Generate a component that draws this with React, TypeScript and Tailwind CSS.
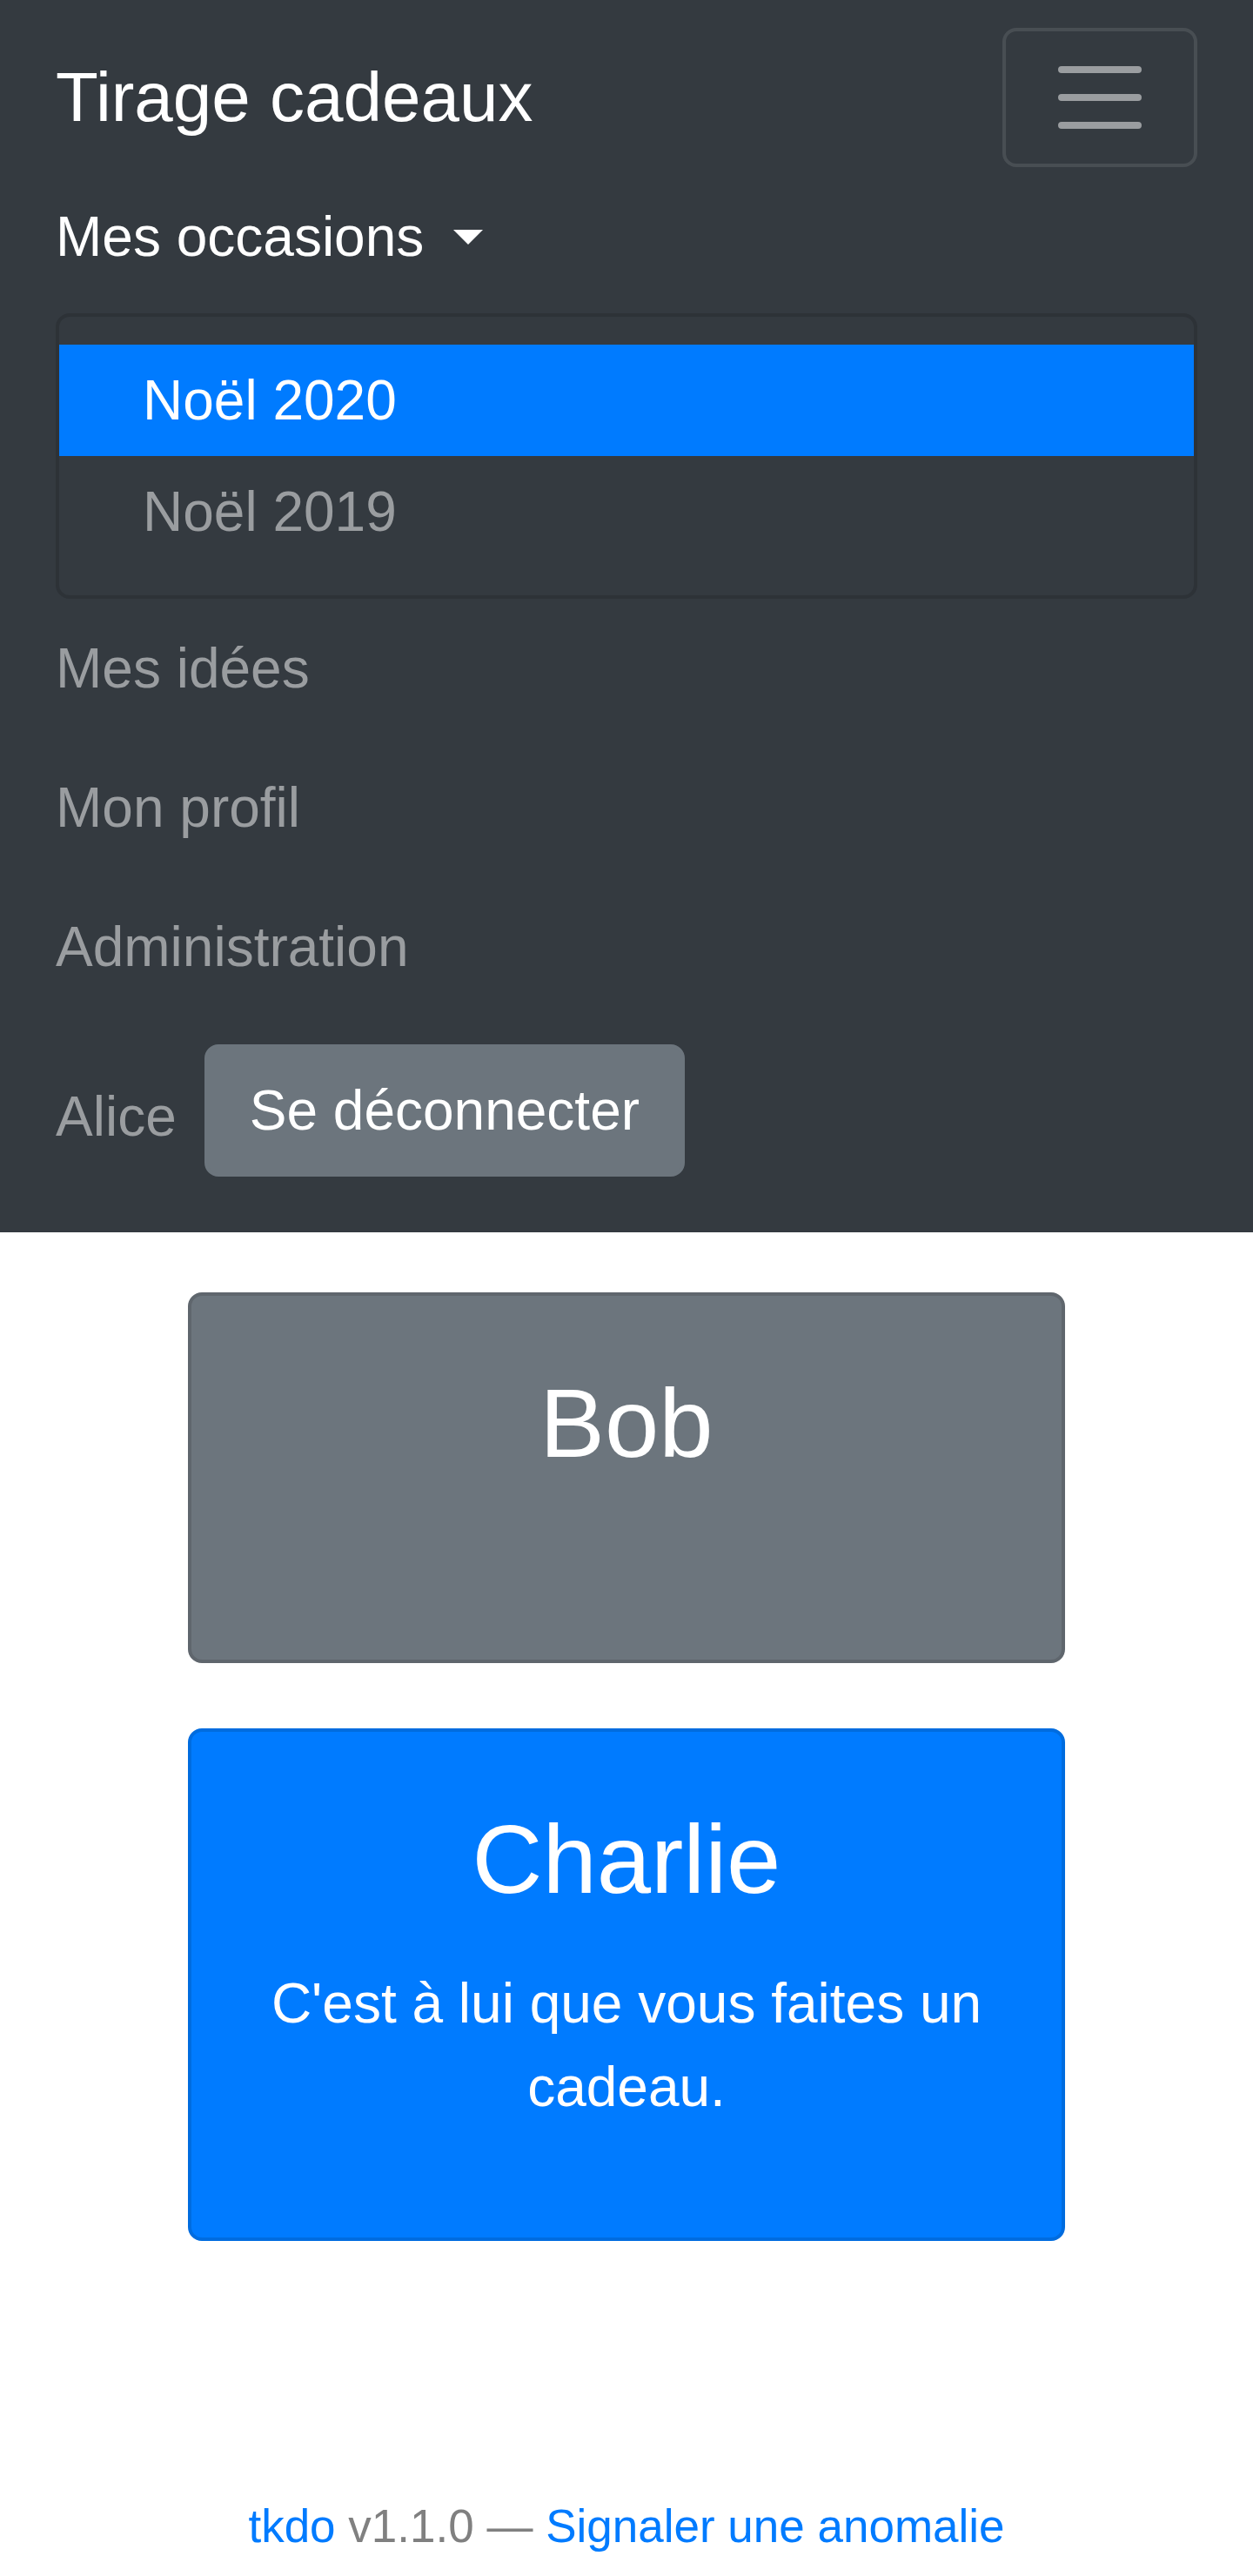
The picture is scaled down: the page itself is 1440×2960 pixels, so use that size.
import { useState } from 'react';

const occasions = [
    { id: 2, titre: 'Noël 2020' },
    { id: 1, titre: 'Noël 2019' },
];

const links = ['Mes idées', 'Mon profil', 'Administration'];

export default function App() {
    const [current, setCurrent] = useState(2);

    return (
        <div
            className="min-h-[2960px] flex flex-col bg-white text-[64px] leading-[1.5] text-[#212529]"
            style={{ fontFamily: '"Liberation Sans", Arial, sans-serif' }}
        >
            {/* Navbar */}
            <nav className="bg-[#343a40] px-[64px] py-[32px]">
                <div className="flex items-center justify-between">
                    <a className="text-[80px] leading-[1.5] py-[20px] text-white">Tirage cadeaux</a>
                    <button className="w-[224px] h-[160px] flex items-center justify-center border-4 border-[rgba(255,255,255,0.1)] rounded-[16px]">
                        <svg width="120" height="120" viewBox="0 0 30 30">
                            <path
                                d="M4 7h22M4 15h22M4 23h22"
                                stroke="rgba(255,255,255,0.5)"
                                strokeWidth="2"
                                strokeLinecap="round"
                            />
                        </svg>
                    </button>
                </div>

                <ul className="flex flex-col">
                    <li>
                        <a className="flex items-center py-[32px] leading-[96px] text-white">
                            Mes occasions
                            <svg className="ml-[34px]" width="34" height="17" viewBox="0 0 34 17">
                                <path d="M0 0h34L17 17z" fill="#fff" />
                            </svg>
                        </a>
                        <div className="mt-[8px] py-[32px] border-4 border-[#2d3237] rounded-[16px] bg-[#343a40]">
                            {occasions.map((o) => (
                                <a
                                    key={o.id}
                                    onClick={() => setCurrent(o.id)}
                                    className={
                                        o.id === current
                                            ? 'block px-[96px] py-[16px] leading-[96px] bg-[#007bff] text-white'
                                            : 'block px-[96px] py-[16px] leading-[96px] text-[#9a9da0]'
                                    }
                                >
                                    {o.titre}
                                </a>
                            ))}
                        </div>
                    </li>
                    {links.map((l) => (
                        <li key={l}>
                            <a className="block py-[32px] leading-[96px] text-[#9a9da0]">{l}</a>
                        </li>
                    ))}
                </ul>

                <div className="flex items-center my-[32px]">
                    <span className="mr-[32px] mt-[14px] leading-[96px] text-[#9a9da0]">Alice</span>
                    <button className="bg-[#6c757d] text-white border-4 border-[#6c757d] rounded-[16px] px-[48px] py-[24px] leading-[96px]">
                        Se déconnecter
                    </button>
                </div>
            </nav>

            {/* Tirages */}
            <main className="flex flex-col items-center pt-[69px]">
                <div className="w-[1008px] h-[426px] bg-[#6c757d] border-4 border-[#5f666d] rounded-[16px] px-[80px] pt-[80px] text-center text-white">
                    <h3 className="text-[112px] leading-[1.2]">Bob</h3>
                </div>

                <div className="w-[1008px] h-[589px] mt-[75px] bg-[#007bff] border-4 border-[#006cdf] rounded-[16px] px-[80px] pt-[80px] text-center text-white">
                    <h3 className="text-[112px] leading-[1.2] mb-[50px]">Charlie</h3>
                    <p className="leading-[96px]">C'est à lui que vous faites un cadeau.</p>
                </div>
            </main>

            {/* Footer */}
            <footer className="mt-auto pb-[18px] text-center text-[53px] leading-[1.5] text-[#808080]">
                <a className="text-[#007bff]">tkdo</a> v1.1.0 — <a className="text-[#007bff]">Signaler une anomalie</a>
            </footer>
        </div>
    );
}
